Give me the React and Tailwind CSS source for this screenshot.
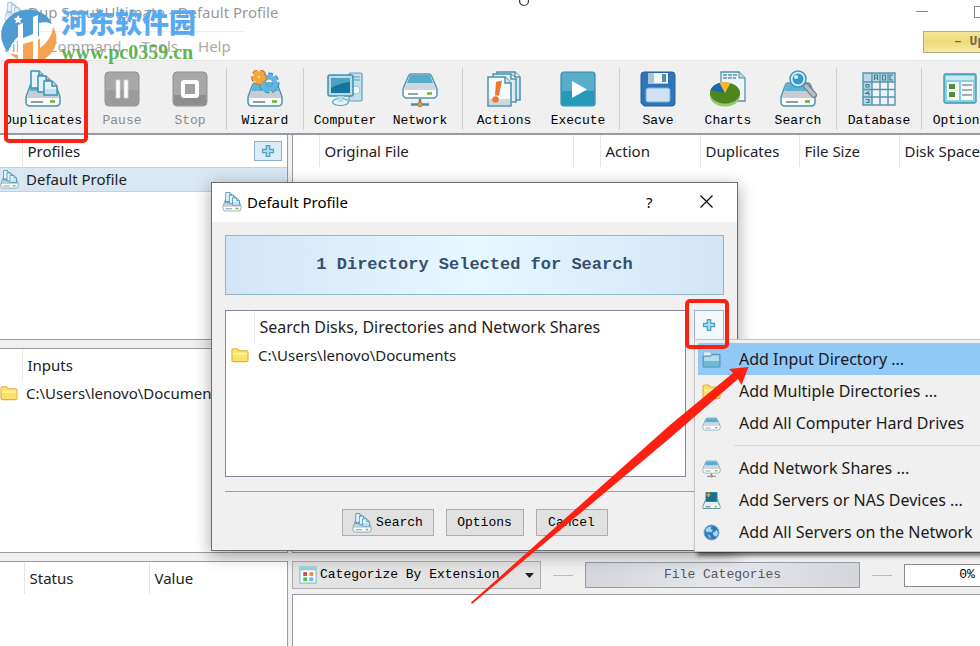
import { useState } from 'react'

const TOOLS = [
  { id: 'Duplicates', w: 'w-[86px]' },
  { id: 'Pause', w: 'w-[72px]', disabled: true },
  { id: 'Stop', w: 'w-[64px]', disabled: true, sep: true },
  { id: 'Wizard', w: 'w-[68px]', sep: true },
  { id: 'Computer', w: 'w-[74px]' },
  { id: 'Network', w: 'w-[76px]', sep: true },
  { id: 'Actions', w: 'w-[74px]' },
  { id: 'Execute', w: 'w-[74px]', sep: true },
  { id: 'Save', w: 'w-[68px]' },
  { id: 'Charts', w: 'w-[72px]' },
  { id: 'Search', w: 'w-[68px]', sep: true },
  { id: 'Database', w: 'w-[76px]', sep: true },
  { id: 'Options', w: 'w-[68px]' },
]

const MENU = [
  { icon: 'blueFolder', label: 'Add Input Directory ...' },
  { icon: 'folder', label: 'Add Multiple Directories ...' },
  { icon: 'drive', label: 'Add All Computer Hard Drives', sep: true },
  { icon: 'Network', label: 'Add Network Shares ...' },
  { icon: 'server', label: 'Add Servers or NAS Devices ...' },
  { icon: 'globe', label: 'Add All Servers on the Network' },
]

const MONO = "font-['Liberation_Mono','Noto_Sans_CJK_SC',monospace] text-[13px]"

export default function App() {
  const [selected, setSelected] = useState(MENU[0].label)

  return (
    <div className="relative flex h-screen flex-col overflow-hidden bg-[#f0f0f0] font-['Noto_Sans','Noto_Sans_CJK_SC',sans-serif] text-[15px] leading-5 text-[#222]">
      <Header />
      <Toolbar />
      <main className="flex min-h-0 flex-1 gap-1">
        <Sidebar />
        <Results />
      </main>
      <ProfileDialog />
      <ContextMenu selected={selected} onSelect={setSelected} />
      <Watermark />
      <Annotations />
    </div>
  )
}

function Header() {
  return (
    <header className="shrink-0 border-b border-[#e6e6e6] bg-white text-[#999]">
      <div className="flex h-[31px] items-center overflow-hidden pb-2">
        <span className="ml-1 opacity-60"><Icon name="Duplicates" size={20} /></span>
        <h1 className="ml-1 flex-1 whitespace-nowrap">Dup Scout Ultimate - Default Profile</h1>
        <button aria-label="Minimize" className="flex w-[58px] items-center">
          <span className="h-px w-3 bg-[#888]" />
        </button>
        <button aria-label="Maximize" className="-mr-1.5 size-3 border border-[#888]" />
      </div>
      <div className="flex h-[29px] items-start">
        <nav className="flex h-full w-[244px] items-center gap-5 border-t border-[#eee] pl-1">
          {['File', 'Command', 'Tools', 'Help'].map((m) => (
            <button key={m} className="text-[#aaa]">{m}</button>
          ))}
        </nav>
        <button className={`${MONO} ml-auto h-[22px] w-[57px] overflow-hidden whitespace-nowrap border border-r-0 border-[#b5aa80] bg-linear-to-b from-[#f5e69a] via-[#eedb77] to-[#f5e9a8] pl-[30px] text-left font-bold text-[#75684a]`}>
          – Up
        </button>
      </div>
    </header>
  )
}

function Toolbar() {
  return (
    <div role="toolbar" className="flex h-[74px] shrink-0 items-start border-b-2 border-[#959ba3] pt-[9px]">
      {TOOLS.map((t) => (
        <div key={t.id} className="flex shrink-0">
          <button disabled={t.disabled} className={`${t.w} ${MONO} flex flex-col items-center gap-[3px] ${t.disabled ? 'text-[#8c8c8c]' : 'text-black'}`}>
            <Icon name={t.id} size={38} />
            <span>{t.id}</span>
          </button>
          {t.sep && <span className="mx-1 -mt-0.5 h-[62px] w-px bg-[#cfcfcf]" />}
        </div>
      ))}
    </div>
  )
}

function Sidebar() {
  const panel = 'border border-l-0 border-[#969ca6] bg-white overflow-hidden'
  return (
    <aside className="flex w-[288px] shrink-0 flex-col gap-2">
      <section className={`${panel} relative flex-1 border-t-0`}>
        <table className="w-full table-fixed">
          <thead>
            <tr className="h-8">
              <th className="w-[22px] border-r border-[#e5e5e5]" />
              <th className="pl-[5px] text-left font-normal">
                <div className="flex items-center justify-between pr-[5px]">
                  Profiles
                  <button aria-label="Add profile" className="flex h-5 w-7 items-center justify-center border border-[#8eb0c6] bg-[#dcebf6]"><Icon name="plus" size={16} /></button>
                </div>
              </th>
            </tr>
          </thead>
          <tbody>
            <tr className="h-6 border-y border-[#b7d4e8] bg-[#d9e7f3]">
              <td><Icon name="Duplicates" size={19} /></td>
              <td className="pl-1">Default Profile</td>
            </tr>
          </tbody>
        </table>
      </section>

      <section className={`${panel} flex-1`}>
        <table className="w-full table-fixed">
          <thead>
            <tr className="h-8">
              <th className="w-[22px] border-r border-[#e5e5e5]" />
              <th className="pl-[5px] text-left font-normal">Inputs</th>
            </tr>
          </thead>
          <tbody>
            <tr className="h-6">
              <td><Icon name="folder" size={18} /></td>
              <td className="pl-1">C:\Users\lenovo\Documents</td>
            </tr>
          </tbody>
        </table>
      </section>

      <section className={`${panel} h-[85px] border-b-0`}>
        <table className="w-full table-fixed">
          <thead>
            <tr className="h-8">
              <th className="w-6 border-r border-[#e5e5e5]" />
              <th className="w-[125px] border-r border-[#e5e5e5] pl-[5px] text-left font-normal">Status</th>
              <th className="pl-[5px] text-left font-normal">Value</th>
            </tr>
          </thead>
        </table>
      </section>
    </aside>
  )
}

function Results() {
  const th = 'border-r border-[#e5e5e5] pl-[5px] text-left font-normal whitespace-nowrap'
  return (
    <div className="flex min-w-0 flex-1 flex-col gap-2">
      <section className="flex-1 overflow-hidden border-b border-l border-[#969ca6] bg-white">
        <table className="w-[760px] table-fixed">
          <thead>
            <tr className="h-8">
              <th className={`${th} w-[26px]`} />
              <th className={`${th} w-[254px]`}>Original File</th>
              <th className={`${th} w-[27px]`} />
              <th className={`${th} w-[100px]`}>Action</th>
              <th className={`${th} w-[99px]`}>Duplicates</th>
              <th className={`${th} w-[100px]`}>File Size</th>
              <th className={th}>Disk Space</th>
            </tr>
          </thead>
        </table>
      </section>

      <section className="flex h-[85px] flex-col gap-[5px] overflow-hidden">
        <div className={`${MONO} flex h-7 shrink-0 items-center gap-3 text-black`}>
          <label className="flex h-7 w-[249px] shrink-0 items-center border border-[#adadad] bg-[#e3e3e3] pl-1.5 pr-1.5">
            <Icon name="categories" size={18} />
            <select aria-label="Categorize" className="h-full flex-1 appearance-none pl-[3px] outline-none">
              <option>Categorize By Extension</option>
            </select>
            <svg width="9" height="5" viewBox="0 0 9 5"><path d="M0 0h9L4.500 5z" fill="#222" /></svg>
          </label>
          <span className="h-px w-5 shrink-0 bg-[#bbb]" />
          <div className="flex h-[26px] w-[275px] shrink-0 items-center justify-center border border-[#969ca3] bg-linear-to-r from-[#d4d6db] via-[#e6e7ec] to-[#d4d6db] text-[#55565c]">File Categories</div>
          <span className="h-px w-5 shrink-0 bg-[#bbb]" />
          <div role="progressbar" aria-valuenow={0} className="flex h-[23px] w-[126px] shrink-0 items-center justify-center border border-[#888] bg-white">0%</div>
        </div>
        <div className="flex-1 border-l border-t border-[#969ca6] bg-white" />
      </section>
    </div>
  )
}

function ProfileDialog() {
  const btn = 'flex h-[27px] items-center justify-center gap-1 border border-[#adadad] bg-[#e1e1e1] text-black'
  return (
    <div role="dialog" aria-label="Default Profile" className="absolute left-[211px] top-[182px] w-[527px] border border-[#6d6d6d] bg-[#f0f0f0] shadow-[0_4px_16px_rgba(0,0,0,0.35)]">
      <div className="flex h-[39px] items-center bg-white pb-0.5 pl-2.5 text-black">
        <Icon name="Duplicates" size={20} />
        <h2 className="ml-[5px] flex-1">Default Profile</h2>
        <button aria-label="Help" className="w-[54px] text-left">?</button>
        <button aria-label="Close" className="w-[37px]">
          <svg width="13" height="13" viewBox="0 0 13 13" stroke="#000" strokeWidth="1.1"><path d="M.5.5l12 12M12.500.5l-12 12" /></svg>
        </button>
      </div>
      <div className="px-[13px] pb-[14px] pt-[13px]">
        <div className="flex h-[60px] items-center justify-center border border-[#92b5c7] bg-linear-to-r from-[#d2e5f5] via-[#e6f8ff] to-[#d2e5f5] font-['Liberation_Mono',monospace] text-[17px] font-bold text-[#35506f]">
          1 Directory Selected for Search
        </div>
        <div className="mt-[15px] flex items-start gap-2">
          <div className="h-[167px] flex-1 border border-[#83899a] bg-white">
            <table className="w-full table-fixed">
              <thead>
                <tr className="h-8">
                  <th className="w-7 border-r border-[#e5e5e5]" />
                  <th className="pl-[5px] text-left text-base leading-5 font-normal">Search Disks, Directories and Network Shares</th>
                </tr>
              </thead>
              <tbody>
                <tr className="h-6">
                  <td className="pl-[5px]"><Icon name="folder" size={18} /></td>
                  <td className="pl-1">C:\Users\lenovo\Documents</td>
                </tr>
              </tbody>
            </table>
          </div>
          <button aria-label="Add directory" className="flex h-[30px] w-[30px] items-center justify-center border border-[#9db3c8] bg-[#f3f8fd]"><Icon name="plus" size={16} /></button>
        </div>
        <hr className="mt-[14px] border-t border-[#a0a0a0]" />
        <div className={`${MONO} mt-[17px] flex justify-center gap-3`}>
          <button className={`${btn} w-[92px]`}><Icon name="Duplicates" size={20} />Search</button>
          <button className={`${btn} w-[78px]`}>Options</button>
          <button className={`${btn} w-[72px]`}>Cancel</button>
        </div>
      </div>
    </div>
  )
}

function ContextMenu({ selected, onSelect }) {
  return (
    <div role="menu" className="absolute left-[694px] top-[339px] w-[300px] border border-[#c4c4c4] bg-[#f0f0f0] p-[3px] text-base leading-5 shadow-[3px_4px_4px_rgba(0,0,0,0.5)]">
      {MENU.map((m) => (
        <div key={m.label}>
          <button
            role="menuitem"
            onClick={() => onSelect(m.label)}
            className={`flex h-8 w-full items-center gap-[18px] whitespace-nowrap pl-1 text-left text-[#1a1a1a] ${selected === m.label ? 'bg-[#91c9f7]' : ''}`}
          >
            <Icon name={m.icon} size={19} />
            {m.label}
          </button>
          {m.sep && <hr className="my-1.5 ml-9 border-t border-[#d7d7d7]" />}
        </div>
      ))}
    </div>
  )
}

function Watermark() {
  return (
    <div className="pointer-events-none absolute left-0 top-[4px] flex">
      <svg className="mt-[2px]" width="57" height="57" viewBox="0 0 57 57">
        <path d="M8 46C0 37-1 25 5 16 11 7 23 2 34 4c9 2 16 8 18 14-4-2-8-2-13-1v13l-16 6v-9C16 31 11 38 8 46z" fill="#4f9bd3" />
        <path d="M53 21c7 11 3 26-9 32-11 6-26 4-34-6 5 2 9 2 13 1V38l17-5v9c7-5 12-12 13-21z" fill="#f5a252" />
        <path d="M18 19l5-2v15l10-4V11l5-2v45l-5 2V34l-10 4v18l-5-2z" fill="#fff" />
        <path d="M18 9l1.500 3 3 .5-2.200 2 .6 3-2.900-1.500-2.700 1.500.6-3-2.200-2 3-.5z" fill="#fff" />
      </svg>
      <div className="ml-1 whitespace-nowrap">
        <div className="font-['Noto_Sans_CJK_SC',sans-serif] text-[27px] font-black leading-9 text-[#57aaf0]">河东软件园</div>
        <div className="font-['Liberation_Serif',serif] text-[20px] font-bold leading-6 text-[#62b354]">www.pc0359.cn</div>
      </div>
    </div>
  )
}

// red callouts drawn over the window
function Annotations() {
  return (
    <div className="pointer-events-none">
      <div className="absolute left-1 top-[59px] h-[84px] w-[84px] rounded-[5px] border-4 border-[#ff2012]" />
      <div className="absolute left-[685px] top-[299px] h-[50px] w-[44px] rounded-[5px] border-4 border-[#ff2012]" />
      <svg className="absolute left-[470px] top-[365px]" width="280" height="240" viewBox="470 365 280 240">
        <path d="M471 602.500L670 425 733 373 729 369 748.500 367 741.500 385 738 379 670 438 472 604z" fill="#ff2012" />
      </svg>
      <svg className="absolute -top-[5px] left-[518px]" width="12" height="12" viewBox="0 0 12 12">
        <circle cx="6" cy="6" r="4.500" fill="#fff" stroke="#333" strokeWidth="1.200" />
      </svg>
    </div>
  )
}

const DriveBase = () => (
  <g>
    <path d="M8 12h20q2 0 3 3l4 11v5q0 4-4 4H5q-4 0-4-4v-5l4-11q1-3 3-3z" fill="#dde3e7" stroke="#4f97b1" strokeWidth="1.500" />
    <path d="M8 13h20q1.500 0 2 2l2 6H4l2-6q.5-2 2-2z" fill="#5fb3d3" />
    <path d="M4 20h28l2 7H2z" fill="#c6ccd2" />
    <path d="M2 27h32v4q0 3-3 3H5q-3 0-3-3z" fill="#fafbfc" />
    <path d="M6 31h12" stroke="#66737c" strokeWidth="1.400" />
    <path d="M25 30.500h5" stroke="#79b53c" strokeWidth="2.800" />
  </g>
)

const gear = (x, y, r, c, edge) => (
  <g>
    <circle cx={x} cy={y} r={r} fill="none" stroke={edge} strokeWidth="7" strokeDasharray="3.400 2" />
    <circle cx={x} cy={y} r={r - 1} fill="none" stroke={c} strokeWidth="4.500" />
    <circle cx={x} cy={y} r={r} fill="none" stroke={c} strokeWidth="5" strokeDasharray="3.200 2.200" />
  </g>
)

const NetDrive = () => (
  <g>
    <path d="M9 3h18q2 0 3 3l5 12v5q0 4-4 4H5q-4 0-4-4v-5L6 6q1-3 3-3z" fill="#eef1f4" stroke="#5799b2" strokeWidth="1.500" />
    <path d="M8 4h20l3 8H5z" fill="#55aed0" />
    <path d="M5 12h26l3 7H2z" fill="#d0d6db" />
    <path d="M2 19h32v4q0 3-3 3H5q-3 0-3-3z" fill="#fbfcfc" />
    <path d="M6 23h10" stroke="#65727b" strokeWidth="1.300" />
    <path d="M25 22.500h5" stroke="#77b738" strokeWidth="2.600" />
  </g>
)

const GLYPHS = {
  Duplicates: (
    <g>
      <DriveBase />
      <g fill="#e4f3fa" stroke="#4090ae" strokeWidth="1.500">
        <path d="M6 0h8l4 4v13H6z" />
        <path d="M13 5h8l4 4v12H13z" />
        <path d="M19 10h8l5 5v9H19z" />
        <path d="M14 0v4h4M21 5v4h4M27 10v5h5" fill="#b9dcec" />
      </g>
      <path d="M20 18h11v5H20z" fill="#c4e1ee" />
    </g>
  ),
  Pause: (
    <g>
      <rect x="1" y="1" width="34" height="34" rx="4" fill="#a8a8a8" stroke="#8f8f8f" />
      <path d="M2 19h32v12q0 3-3 3H5q-3 0-3-3z" fill="#9b9b9b" />
      <path d="M12 9h4v18h-4zM20 9h4v18h-4z" fill="#fff" stroke="#d4d4d4" strokeWidth=".8" />
    </g>
  ),
  Stop: (
    <g>
      <rect x="1" y="1" width="34" height="34" rx="4" fill="#a8a8a8" stroke="#8f8f8f" />
      <path d="M2 24h32v7q0 3-3 3H5q-3 0-3-3z" fill="#8d8d8d" />
      <rect x="11" y="11" width="14" height="14" rx="1" fill="#a0a0a0" stroke="#fff" strokeWidth="4" />
    </g>
  ),
  Wizard: (
    <g>
      <DriveBase />
      {gear(22, 12, 7, '#62b5e2', '#3586ae')}
      {gear(12, 6, 4.5, '#f6a636', '#cc7a1c')}
    </g>
  ),
  Computer: (
    <g>
      <rect x="22" y="2" width="13" height="28" rx="1.500" fill="#bfe0ec" stroke="#5aa0ba" strokeWidth="1.200" />
      <path d="M25 6h8M25 9h8" stroke="#5aa0ba" />
      <circle cx="29" cy="19" r="4" fill="#f6fbfd" stroke="#94c6d8" />
      <rect x="1" y="4" width="25" height="21" rx="2" fill="#b7dcea" stroke="#3f8fae" strokeWidth="1.500" />
      <rect x="4" y="7" width="19" height="15" fill="#14769c" />
      <path d="M4 7h19v4q-10 1-19 6z" fill="#4aa2c0" />
      <path d="M10 25h7v4h-7z" fill="#a4d2e3" />
      <ellipse cx="13.500" cy="31" rx="8" ry="3.500" fill="#e4f3f8" stroke="#5aa0ba" strokeWidth="1.200" />
      <path d="M11 26h5v5h-5z" fill="#b8dce9" />
    </g>
  ),
  Network: (
    <g>
      <NetDrive />
      <path d="M18 28v4M9 33.500h18" stroke="#4790b0" strokeWidth="2.400" />
      <circle cx="18" cy="33.500" r="2.400" fill="#e89a45" stroke="#9b6d38" strokeWidth=".7" />
    </g>
  ),
  drive: <g transform="translate(0 4)"><NetDrive /></g>,
  Actions: (
    <g stroke="#4c93ab" strokeWidth="1.500">
      <path d="M11 1h18l5 5v23H11z" fill="#d5e9f1" />
      <path d="M29 1v5h5" fill="#fff" />
      <path d="M7 3h18l5 5v23H7z" fill="#dcecf3" />
      <path d="M25 3v5h5" fill="#fff" />
      <path d="M2 6h17l6 6v23H2z" fill="#f7fafc" />
      <path d="M19 6v6h6" fill="#d3e9f0" />
      <path d="M3 28h21v6H3z" fill="#c9dbe0" stroke="none" />
      <path d="M10 11l6-1.500-3 15h-4z" fill="#f07432" stroke="none" />
      <circle cx="9.500" cy="28.500" r="3.200" fill="#f07432" stroke="none" />
    </g>
  ),
  Execute: (
    <g>
      <rect x="1" y="1" width="34" height="34" rx="3" fill="#57aecb" stroke="#3389a6" strokeWidth="1.200" />
      <path d="M2 20h32v12q0 2-2 2H4q-2 0-2-2z" fill="#2599b9" />
      <path d="M12 10l15 8.500L12 27z" fill="#fff" />
    </g>
  ),
  Save: (
    <g>
      <path d="M4 1h28q3 0 3 3v28q0 3-3 3H4l-3-3V4q0-3 3-3z" fill="#2f74b8" stroke="#245f9d" />
      <path d="M8 2h20v11H8z" fill="#a5c6d8" />
      <path d="M14 2h14v10H14z" fill="#f4f7f9" />
      <path d="M22 3h4v8h-4z" fill="#518fad" />
      <rect x="6" y="17" width="24" height="14" rx="2" fill="#d0e3f4" stroke="#75aede" />
    </g>
  ),
  Charts: (
    <g>
      <path d="M11 1h18l6 6v23H11z" fill="#eef6fa" stroke="#4d94ab" strokeWidth="1.300" />
      <path d="M29 1v6h6" fill="#b4dce8" stroke="#4d94ab" />
      <path d="M13 4h14M13 7h13" stroke="#5491aa" strokeWidth="1.500" strokeDasharray="4 1" />
      <ellipse cx="15" cy="25" rx="15" ry="10.500" fill="#9cc474" />
      <ellipse cx="15" cy="22" rx="15" ry="10.500" fill="#4d861d" />
      <path d="M15 22L.5 19q2-5 9-7.200z" fill="#1768ad" />
      <path d="M15 22l-5.500-10.200q6-1.600 11 .2z" fill="#f9b52e" />
    </g>
  ),
  Search: (
    <g>
      <DriveBase />
      <path d="M26 15l8 9" stroke="#747e8a" strokeWidth="6" strokeLinecap="round" />
      <path d="M26 15l8 9" stroke="#b7bdc4" strokeWidth="3.500" strokeLinecap="round" />
      <circle cx="18" cy="8" r="8" fill="#d9f0fa" stroke="#4394ba" strokeWidth="1.500" />
      <circle cx="18" cy="8" r="5.500" fill="#389cc8" />
      <circle cx="16" cy="6" r="2" fill="#d9f3fc" />
    </g>
  ),
  Database: (
    <g>
      <path d="M2 2h32v32H2z" fill="#edf5f8" />
      <path d="M2 2h32v9H11v23H2z" fill="#b9d9e4" />
      <path d="M2 2h32v32H2zM2 11h32M2 18.500h32M2 26h32M11 2v32M19 2v32M27 2v32" fill="none" stroke="#5795ad" strokeWidth="1.400" />
      <path d="M13.500 9V4h3v5M13.500 7h3M21.500 4h3v5h-3zM32 4h-3v5h3M5 13.500h3v2.500H5zM8 20.500l-3 2h3v2M5 28.500h3v3H5" fill="none" stroke="#3b7c95" strokeWidth="1.200" />
    </g>
  ),
  Options: (
    <g>
      <rect x="2" y="3" width="32" height="29" rx="1.500" fill="#8ccfdf" stroke="#3796b0" strokeWidth="1.300" />
      <path d="M4 5h28v4H4z" fill="#c6ebf3" />
      <path d="M5 11h12v18H5zM19 11h12v18H19z" fill="#f6fbfc" />
      <path d="M7 13h6v5H7zM7 21h6v5H7z" fill="#4f9136" />
      <path d="M20 14h10M20 19h10M20 24h10" stroke="#8c949b" strokeWidth="1.500" />
    </g>
  ),
  categories: (
    <g>
      <rect x="1" y="1" width="34" height="34" fill="#f5fbfd" stroke="#6bb7cc" strokeWidth="2" />
      <path d="M2 2h32v6H2z" fill="#8fd1e2" />
      <path d="M8 12h8v8H8z" fill="#d2483c" />
      <path d="M21 12h8v8h-8z" fill="#ee8a4e" />
      <path d="M8 23h8v8H8z" fill="#59bd49" />
      <path d="M21 23h8v8h-8z" fill="#79a9ee" />
    </g>
  ),
  folder: (
    <g>
      <path d="M1 8q0-3 3-3h8l4 4h16q3 0 3 3v17q0 3-3 3H4q-3 0-3-3z" fill="#fbe168" stroke="#dbb13c" strokeWidth="2.200" />
      <path d="M3 13h30v5H3z" fill="#fff08c" />
    </g>
  ),
  blueFolder: (
    <g>
      <path d="M2 3h14l3 4h15v26H2z" fill="#e6ecee" stroke="#8fb0be" strokeWidth="1.500" />
      <path d="M1 11h14l3-3h17v25H1z" fill="#6fbad8" stroke="#4c93b0" strokeWidth="1.800" />
      <path d="M3 13h14l2-3h14v11H3z" fill="#b4def0" />
    </g>
  ),
  server: (
    <g>
      <path d="M6 17h24l5 12v5H1v-5z" fill="#e3edf1" stroke="#5798ad" strokeWidth="2" />
      <path d="M7 2h22v18H7z" fill="#16738f" stroke="#2b839d" strokeWidth="2" />
      <path d="M2 28h32v5H2z" fill="#f5f8f9" />
      <path d="M24 30.500h5" stroke="#78b73e" strokeWidth="2.500" />
      <path d="M6 30.500h10" stroke="#5c6b72" strokeWidth="2" />
      <path d="M12 2v9M8 6.500h8" stroke="#f0a43c" strokeWidth="2.500" />
    </g>
  ),
  globe: (
    <g>
      <circle cx="18" cy="18" r="15" fill="#2e7bb8" stroke="#74add5" strokeWidth="2" />
      <path d="M6 12q5-7 12-6l-2 5 5 2-4 5-5-2-3 3zM20 19l9-6q4 7-1 13l-5-1z" fill="#a9d5ee" />
      <path d="M9 22l6 1 3 7q-6-1-9-8z" fill="#7ab9de" />
    </g>
  ),
  plus: <path d="M14 5h8v9h9v8h-9v9h-8v-9H5v-8h9z" fill="#a5dcf0" stroke="#4d9fc2" strokeWidth="3" strokeLinejoin="round" />,
}

function Icon({ name, size }) {
  return (
    <svg className="block shrink-0" width={size} height={size} viewBox="-1 -1 38 38" aria-hidden="true">
      {GLYPHS[name]}
    </svg>
  )
}
